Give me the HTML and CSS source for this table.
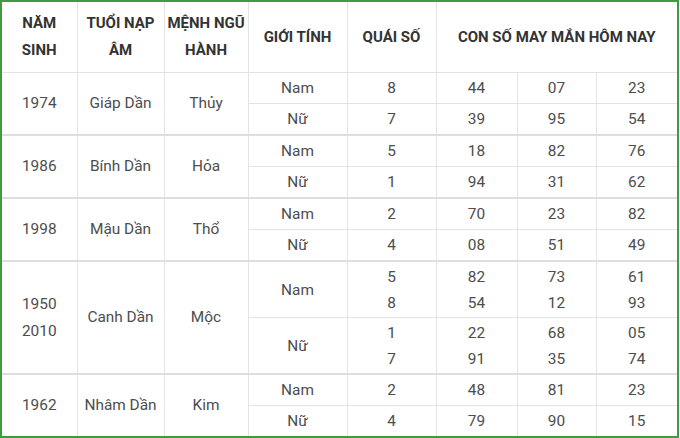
FILE: index.html
```html
<!DOCTYPE html>
<html lang="vi">
<head>
<meta charset="utf-8">
<link rel="stylesheet" href="styles.css">
</head>
<body>
<div class="frame">
<table class="lucky">
<colgroup>
<col class="c1"><col class="c2"><col class="c3"><col class="c4"><col class="c5"><col class="c6"><col class="c7"><col class="c8">
</colgroup>
<thead>
<tr class="head">
<th>NĂM<br>SINH</th>
<th>TUỔI NẠP<br>ÂM</th>
<th>MỆNH NGŨ<br>HÀNH</th>
<th>GIỚI TÍNH</th>
<th>QUÁI SỐ</th>
<th colspan="3">CON SỐ MAY MẮN HÔM NAY</th>
</tr>
</thead>
<tbody>
<tr class="r first">
<td rowspan="2">1974</td><td rowspan="2">Giáp Dần</td><td rowspan="2">Thủy</td>
<td>Nam</td><td>8</td><td>44</td><td>07</td><td>23</td>
</tr>
<tr class="r">
<td>Nữ</td><td>7</td><td>39</td><td>95</td><td>54</td>
</tr>
<tr class="r group">
<td rowspan="2">1986</td><td rowspan="2">Bính Dần</td><td rowspan="2">Hỏa</td>
<td>Nam</td><td>5</td><td>18</td><td>82</td><td>76</td>
</tr>
<tr class="r">
<td>Nữ</td><td>1</td><td>94</td><td>31</td><td>62</td>
</tr>
<tr class="r group">
<td rowspan="2">1998</td><td rowspan="2">Mậu Dần</td><td rowspan="2">Thổ</td>
<td>Nam</td><td>2</td><td>70</td><td>23</td><td>82</td>
</tr>
<tr class="r">
<td>Nữ</td><td>4</td><td>08</td><td>51</td><td>49</td>
</tr>
<tr class="r2 group">
<td rowspan="2">1950<br>2010</td><td rowspan="2">Canh Dần</td><td rowspan="2">Mộc</td>
<td>Nam</td><td>5<br>8</td><td>82<br>54</td><td>73<br>12</td><td>61<br>93</td>
</tr>
<tr class="r2">
<td>Nữ</td><td>1<br>7</td><td>22<br>91</td><td>68<br>35</td><td>05<br>74</td>
</tr>
<tr class="r group">
<td rowspan="2">1962</td><td rowspan="2">Nhâm Dần</td><td rowspan="2">Kim</td>
<td>Nam</td><td>2</td><td>48</td><td>81</td><td>23</td>
</tr>
<tr class="r">
<td>Nữ</td><td>4</td><td>79</td><td>90</td><td>15</td>
</tr>
</tbody>
</table>
</div>
</body>
</html>
```

FILE: styles.css
```css
html, body {
  margin: 0;
  padding: 0;
  background: #ffffff;
}

.frame {
  width: 675px;
  height: 434px;
  border: 2px solid #3d9c40;
  overflow: hidden;
  background: #ffffff;
}

.lucky {
  width: 675px;
  border-collapse: collapse;
  table-layout: fixed;
  font-family: Roboto, "Liberation Sans", sans-serif;
  font-size: 15.4px;
  color: #4d4d4d;
}

.c1 { width: 75px; }
.c2 { width: 87px; }
.c3 { width: 84px; }
.c4 { width: 99px; }
.c5 { width: 89px; }
.c6 { width: 81px; }
.c7 { width: 79px; }
.c8 { width: 81px; }

.lucky th,
.lucky td {
  border: 1px solid #e3e3e3;
  text-align: center;
  vertical-align: middle;
  padding: 0;
}

.lucky tr > :first-child { border-left: none; }
.lucky tr > :last-child { border-right: none; }
.lucky thead th { border-top: none; }
.lucky tbody tr:last-child td { border-bottom: none; }
.lucky tbody tr:nth-last-child(2) td[rowspan] { border-bottom: none; }

.head th {
  height: 70px;
  font-weight: 700;
  font-size: 15px;
  color: #333333;
  line-height: 27px;
}

.r td {
  height: 30px;
  line-height: 20px;
}

.r2 td {
  height: 55px;
  line-height: 26px;
}

.lucky td[rowspan] {
  line-height: 27px;
}

.group td {
  border-top: 2px solid #dedede;
}
```
